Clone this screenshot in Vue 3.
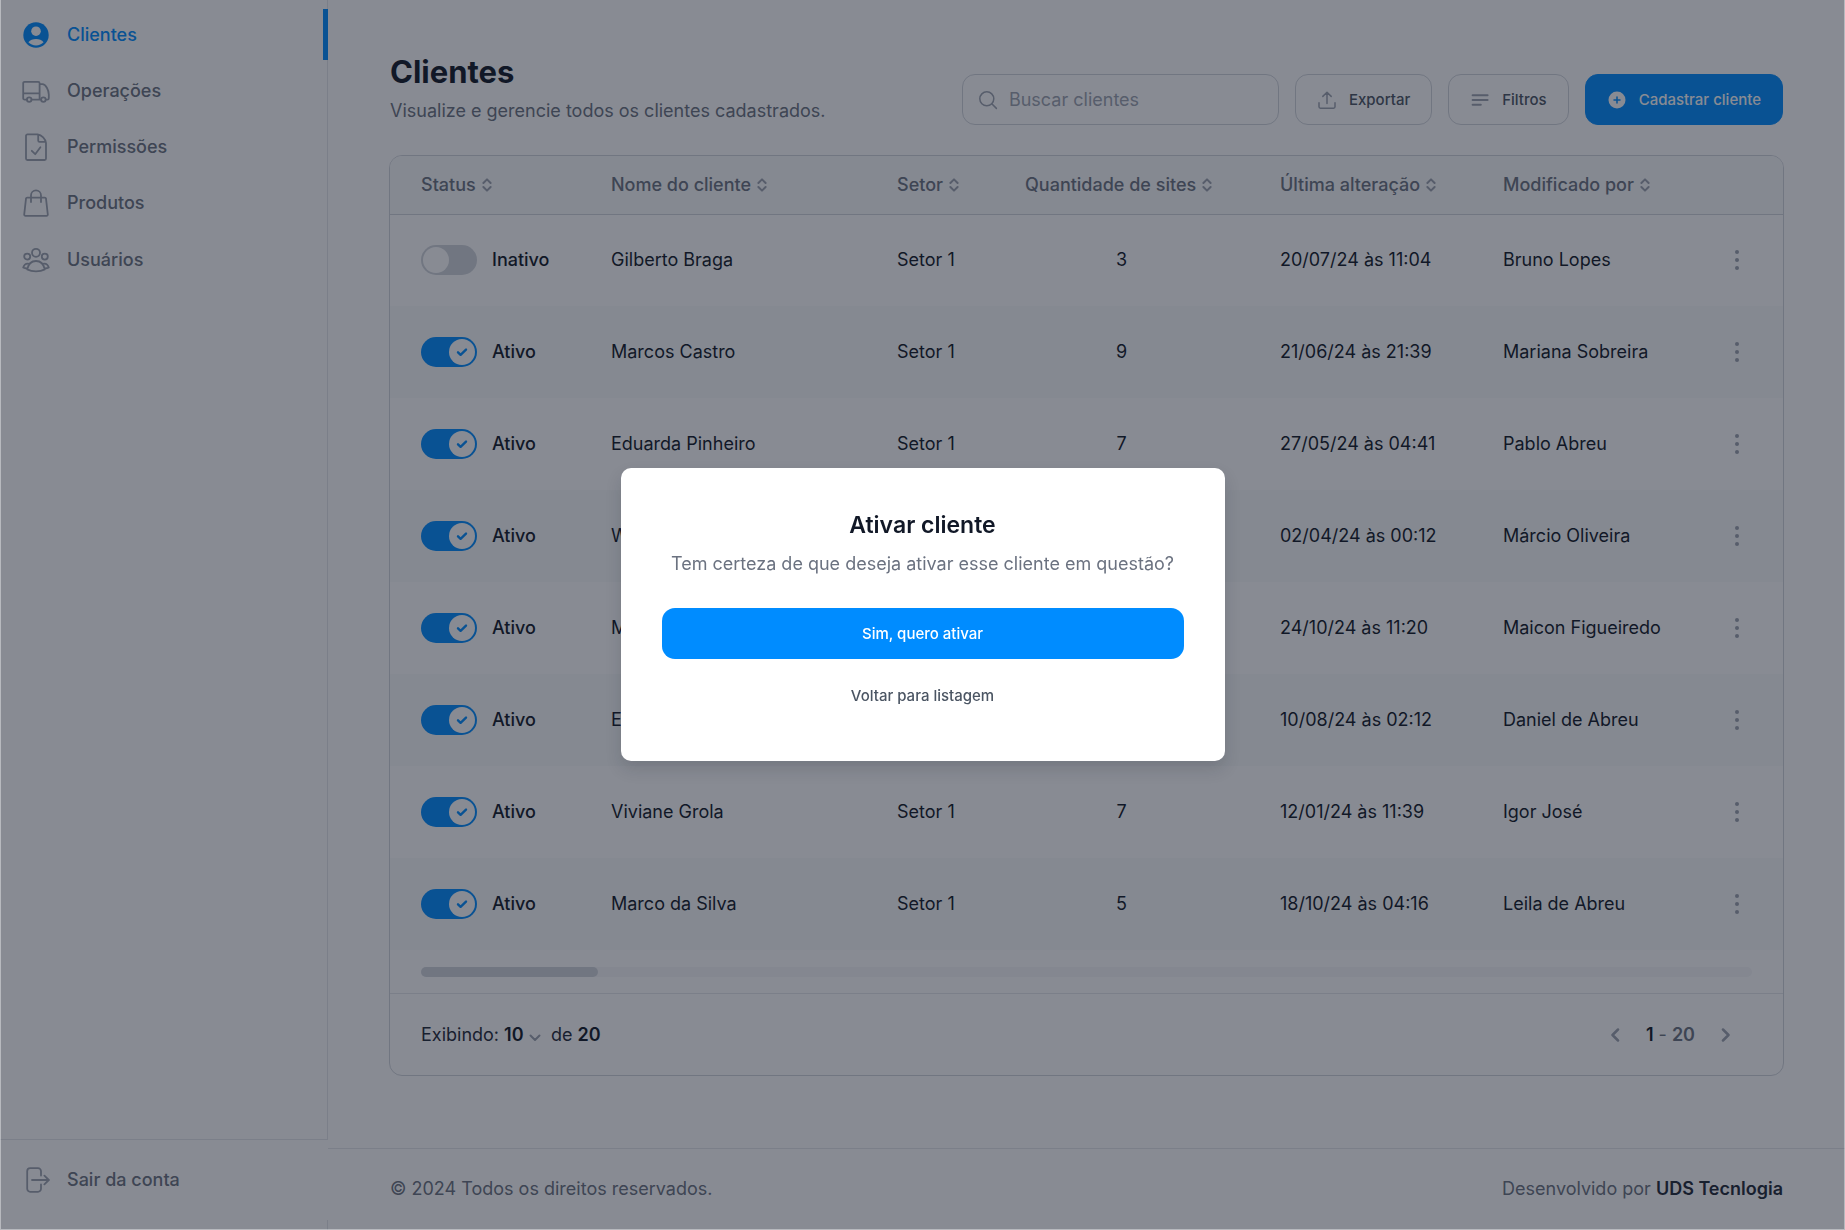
<script setup>
import { ref, reactive } from 'vue'

const navItems = [
  { label: 'Clientes', icon: 'user', active: true },
  { label: 'Operações', icon: 'truck' },
  { label: 'Permissões', icon: 'file' },
  { label: 'Produtos', icon: 'bag' },
  { label: 'Usuários', icon: 'users' },
]

const columns = [
  { key: 'status', label: 'Status' },
  { key: 'name', label: 'Nome do cliente' },
  { key: 'sector', label: 'Setor' },
  { key: 'sites', label: 'Quantidade de sites' },
  { key: 'changed', label: 'Última alteração' },
  { key: 'author', label: 'Modificado por' },
]

const clients = reactive([
  { active: false, name: 'Gilberto Braga', sector: 'Setor 1', sites: 3, changed: '20/07/24 às 11:04', author: 'Bruno Lopes' },
  { active: true, name: 'Marcos Castro', sector: 'Setor 1', sites: 9, changed: '21/06/24 às 21:39', author: 'Mariana Sobreira' },
  { active: true, name: 'Eduarda Pinheiro', sector: 'Setor 1', sites: 7, changed: '27/05/24 às 04:41', author: 'Pablo Abreu' },
  { active: true, name: 'Wagner Lima', sector: 'Setor 1', sites: 4, changed: '02/04/24 às 00:12', author: 'Márcio Oliveira' },
  { active: true, name: 'Marina Souza', sector: 'Setor 1', sites: 6, changed: '24/10/24 às 11:20', author: 'Maicon Figueiredo' },
  { active: true, name: 'Elisa Rocha', sector: 'Setor 1', sites: 2, changed: '10/08/24 às 02:12', author: 'Daniel de Abreu' },
  { active: true, name: 'Viviane Grola', sector: 'Setor 1', sites: 7, changed: '12/01/24 às 11:39', author: 'Igor José' },
  { active: true, name: 'Marco da Silva', sector: 'Setor 1', sites: 5, changed: '18/10/24 às 04:16', author: 'Leila de Abreu' },
])

const search = ref('')
const pageSize = ref('10')
const modalOpen = ref(true)

function activate() {
  clients[0].active = true
  modalOpen.value = false
}
</script>

<template>
  <div class="layout">
    <aside class="sidebar">
      <nav class="nav">
        <ul class="nav-list">
          <li v-for="item in navItems" :key="item.label">
            <a href="#" class="nav-link" :class="{ active: item.active }">
              <svg v-if="item.icon === 'user'" class="nav-icon" viewBox="0 0 28 28">
                <circle cx="14" cy="14" r="12.7" fill="currentColor" />
                <circle cx="14" cy="10.2" r="4.8" fill="#fff" />
                <path d="M6.4 21.2c1.700-2.300 4.500-3.300 7.600-3.300s5.900 1 7.600 3.300c-1.900 2-4.600 3.200-7.600 3.200s-5.700-1.200-7.600-3.200z" fill="#fff" />
              </svg>
              <svg v-else-if="item.icon === 'truck'" class="nav-icon" viewBox="0 0 28 28">
                <path d="M4.900 22.600H2.600a1.400 1.400 0 0 1-1.400-1.400V6.200a1.400 1.400 0 0 1 1.400-1.400h13.600a1.400 1.400 0 0 1 1.400 1.400v16.400M9.600 22.600h9.400M1.200 16.400h16.400M17.600 7.200h2.800c3.400 0 6.400 5.800 6.400 10.400v3.600a1.400 1.400 0 0 1-1.400 1.400h-1.600" />
                <circle cx="7.200" cy="22.600" r="2.300" />
                <circle cx="21.400" cy="22.600" r="2.300" />
              </svg>
              <svg v-else-if="item.icon === 'file'" class="nav-icon" viewBox="0 0 28 28">
                <path d="M15.600 1.400H5.400a1.400 1.400 0 0 0-1.400 1.400v22.800A1.400 1.400 0 0 0 5.400 27h17.200a1.400 1.400 0 0 0 1.400-1.400V10c-.4-4.200-4.400-8-8.400-8.600M16.200 1.800v5.600a1.400 1.400 0 0 0 1.400 1.400h5.800" />
                <path d="M9.800 17.800l3.400 3.400 5.200-7" />
              </svg>
              <svg v-else-if="item.icon === 'bag'" class="nav-icon" viewBox="0 0 28 28">
                <path d="M5.200 8.600h17.600a1.200 1.200 0 0 1 1.200 1.100l1.800 15.800a1.200 1.200 0 0 1-1.200 1.300H3.400a1.200 1.200 0 0 1-1.200-1.300L4 9.700a1.200 1.200 0 0 1 1.200-1.100zM9 13V6.400a5 5 0 0 1 10 0V13" />
              </svg>
              <svg v-else class="nav-icon" viewBox="0 0 28 28">
                <circle cx="14" cy="6.800" r="4" />
                <circle cx="5.200" cy="10.600" r="3" />
                <circle cx="22.800" cy="10.600" r="3" />
                <path d="M5.200 23.400c1-4.800 4.200-8.400 8.800-8.400s7.800 3.600 8.800 8.400c-2.400 1.300-5.400 2-8.800 2s-6.400-.7-8.800-2zM7.400 17.800c-3.200-.8-5.400 1-6.200 3.800 1 .6 2.200.9 3.800.9M20.600 17.800c3.200-.8 5.400 1 6.200 3.800-1 .6-2.200.9-3.800.9" />
              </svg>
              <span>{{ item.label }}</span>
            </a>
          </li>
        </ul>
      </nav>
      <div class="logout">
        <a href="#" class="nav-link">
          <svg class="nav-icon" viewBox="0 0 28 28">
            <path d="M19 9.600V5.200a3 3 0 0 0-3-3H8.200a3 3 0 0 0-3 3v17.600a3 3 0 0 0 3 3H16a3 3 0 0 0 3-3v-4.400M10 14h17M22.400 9.600l4.400 4.400-4.400 4.400" />
          </svg>
          <span>Sair da conta</span>
        </a>
      </div>
      <div class="sidebar-end"></div>
    </aside>

    <div class="page">
      <main class="content">
        <header class="page-header">
          <div class="heading">
            <h1>Clientes</h1>
            <p>Visualize e gerencie todos os clientes cadastrados.</p>
          </div>
          <div class="toolbar">
            <label class="search">
              <svg class="tool-icon" viewBox="0 0 20 20">
                <circle cx="8.800" cy="8.800" r="7" />
                <path d="M13.800 13.800l4.600 4.600" />
              </svg>
              <input v-model="search" type="text" placeholder="Buscar clientes" aria-label="Buscar clientes" />
            </label>
            <button type="button" class="btn">
              <svg class="tool-icon" viewBox="0 0 20 20">
                <path d="M2 12.800v4a1.400 1.400 0 0 0 1.400 1.400h13.200a1.400 1.400 0 0 0 1.400-1.400v-4M10 13.600V2.400M5.800 6.400L10 2.200l4.200 4.200" />
              </svg>
              Exportar
            </button>
            <button type="button" class="btn">
              <svg class="tool-icon bars" viewBox="0 0 20 20">
                <path d="M2.600 5.200h15M2.600 10h15M2.600 14.800h8.200" />
              </svg>
              Filtros
            </button>
            <button type="button" class="btn primary">
              <svg class="tool-icon" viewBox="0 0 20 20">
                <circle cx="10" cy="10" r="8.500" fill="#fff" stroke="none" />
                <path d="M10 7v6M7 10h6" stroke="#008cff" />
              </svg>
              Cadastrar cliente
            </button>
          </div>
        </header>

        <section class="card">
          <table>
            <colgroup>
              <col class="c-status" />
              <col />
              <col class="c-sector" />
              <col class="c-sites" />
              <col class="c-changed" />
              <col class="c-author" />
              <col class="c-actions" />
            </colgroup>
            <thead>
              <tr>
                <th v-for="col in columns" :key="col.key">
                  <span class="sort">
                    {{ col.label }}
                    <svg class="sort-icon" viewBox="0 0 10 14">
                      <path d="M1.400 5L5 1.400 8.600 5M1.400 9L5 12.600 8.600 9" />
                    </svg>
                  </span>
                </th>
                <th aria-label="Ações"></th>
              </tr>
            </thead>
            <tbody>
              <tr v-for="client in clients" :key="client.name">
                <td>
                  <label class="toggle">
                    <input v-model="client.active" type="checkbox" role="switch" />
                    <span class="track">
                      <span class="knob">
                        <svg v-if="client.active" viewBox="0 0 12 12">
                          <path d="M2 6.300l2.600 2.500L10 3.600" />
                        </svg>
                      </span>
                    </span>
                    <span>{{ client.active ? 'Ativo' : 'Inativo' }}</span>
                  </label>
                </td>
                <td>{{ client.name }}</td>
                <td>{{ client.sector }}</td>
                <td class="centered">{{ client.sites }}</td>
                <td>{{ client.changed }}</td>
                <td>{{ client.author }}</td>
                <td class="centered">
                  <button type="button" class="more" aria-label="Mais opções">
                    <svg viewBox="0 0 4 20">
                      <circle cx="2" cy="2" r="2" />
                      <circle cx="2" cy="10" r="2" />
                      <circle cx="2" cy="18" r="2" />
                    </svg>
                  </button>
                </td>
              </tr>
            </tbody>
          </table>
          <div class="scroll">
            <div class="scroll-track"><div class="scroll-thumb"></div></div>
          </div>
          <div class="card-footer">
            <div class="showing">
              <label for="page-size">Exibindo:</label>
              <span class="size">
                <select id="page-size" v-model="pageSize">
                  <option>10</option>
                  <option>20</option>
                </select>
                <svg viewBox="0 0 12 8"><path d="M1.500 1.500L6 6l4.500-4.500" /></svg>
              </span>
              <span>de</span>
              <strong>20</strong>
            </div>
            <div class="pager">
              <button type="button" aria-label="Página anterior">
                <svg viewBox="0 0 10 14"><path d="M8 1.500L2.500 7 8 12.500" /></svg>
              </button>
              <span><strong>1</strong> - <b>20</b></span>
              <button type="button" aria-label="Próxima página">
                <svg viewBox="0 0 10 14"><path d="M2 1.500L7.500 7 2 12.500" /></svg>
              </button>
            </div>
          </div>
        </section>
      </main>

      <footer class="page-footer">
        <span>© 2024 Todos os direitos reservados.</span>
        <span>Desenvolvido por <strong>UDS Tecnlogia</strong></span>
      </footer>
    </div>

    <div v-if="modalOpen" class="overlay">
      <div class="modal" role="dialog" aria-modal="true" aria-labelledby="modal-title">
        <h2 id="modal-title">Ativar cliente</h2>
        <p>Tem certeza de que deseja ativar esse cliente em questão?</p>
        <button type="button" class="confirm" @click="activate">Sim, quero ativar</button>
        <button type="button" class="back" @click="modalOpen = false">Voltar para listagem</button>
      </div>
    </div>
  </div>
</template>

<style>
body {
  margin: 0;
  background: #fff;
}
</style>

<style scoped>
* {
  box-sizing: border-box;
}

.layout {
  display: flex;
  min-height: 100vh;
  background: #fff;
  color: #111827;
  font-family: Inter, 'Liberation Sans', sans-serif;
  font-size: 18px;
  line-height: 24px;
}

button,
input,
select {
  font: inherit;
  color: inherit;
}

button {
  cursor: pointer;
}

svg {
  display: block;
  flex: none;
  fill: none;
  stroke: currentColor;
  stroke-width: 2;
  stroke-linecap: round;
  stroke-linejoin: round;
}

.sidebar {
  display: flex;
  flex-direction: column;
  flex: none;
  width: 328px;
}

.nav {
  flex: 1;
  padding-top: 9px;
  border-right: 1px solid #e5e7eb;
}

.nav-list {
  display: flex;
  flex-direction: column;
  justify-content: space-between;
  height: 276px;
  margin: 0 -1px 0 0;
  padding: 0;
  list-style: none;
}

.nav-link {
  display: flex;
  align-items: center;
  gap: 17px;
  height: 51px;
  padding-left: 22px;
  color: #6b7280;
  font-weight: 500;
  text-decoration: none;
}

.nav-link.active {
  border-right: 5px solid #008cff;
  color: #008cff;
}

.nav-icon {
  width: 28px;
  height: 28px;
  color: #9ca3af;
  stroke-width: 1.8;
}

.active .nav-icon {
  color: #008cff;
  stroke: none;
}

.logout {
  padding: 14px 0 15px;
  border-top: 1px solid #e5e7eb;
}

.sidebar-end {
  height: 10px;
  border-right: 1px solid #e5e7eb;
}

.page {
  display: flex;
  flex: 1;
  flex-direction: column;
  min-width: 0;
}

.content {
  flex: 1;
  padding: 52px 61px 0;
}

.page-header {
  display: flex;
  align-items: flex-end;
  justify-content: space-between;
  margin-bottom: 30px;
  padding: 0 1px;
}

.heading {
  padding-bottom: 2px;
}

h1 {
  margin: 0 0 7px;
  font-size: 31px;
  font-weight: 700;
  line-height: 40px;
}

.heading p {
  margin: 0;
  color: #6b7280;
}

.toolbar {
  display: flex;
  gap: 16px;
}

.search,
.btn {
  display: flex;
  align-items: center;
  height: 51px;
  border: 1px solid #d1d5db;
  border-radius: 13px;
  background: #fff;
}

.search {
  gap: 11px;
  width: 317px;
  padding: 0 15px;
  color: #9ca3af;
}

.search input {
  flex: 1;
  min-width: 0;
  padding: 0;
  border: 0;
  outline: 0;
  background: none;
}

.search input::placeholder {
  color: #9ca3af;
  opacity: 1;
}

.tool-icon {
  width: 20px;
  height: 20px;
  color: #9ca3af;
  stroke-width: 1.5;
}

.tool-icon.bars {
  stroke-width: 2;
}

.btn {
  gap: 12px;
  padding: 0 21px;
  color: #4b5563;
  font-size: 15px;
  font-weight: 500;
}

.btn.primary {
  border-color: #008cff;
  background: #008cff;
  color: #fff;
}

.card {
  overflow: hidden;
  border: 1px solid #d1d5db;
  border-radius: 13px;
}

table {
  width: 100%;
  border-collapse: collapse;
  table-layout: fixed;
}

.c-status {
  width: 190px;
}

.c-sector {
  width: 128px;
}

.c-sites {
  width: 255px;
}

.c-changed {
  width: 223px;
}

.c-author {
  width: 218px;
}

.c-actions {
  width: 93px;
}

th,
td {
  padding: 0 0 0 31px;
  text-align: left;
  white-space: nowrap;
}

thead tr {
  height: 58px;
  border-bottom: 1px solid #d1d5db;
  background: #f9fafb;
}

th {
  color: #6b7280;
  font-weight: 500;
}

.sort {
  display: flex;
  align-items: center;
  gap: 6px;
}

.sort-icon {
  width: 10px;
  height: 14px;
  color: #9ca3af;
}

tbody tr {
  height: 92px;
}

tbody tr:nth-child(even) {
  background: #f9fafb;
}

.centered {
  padding: 0;
  text-align: center;
}

.toggle {
  display: flex;
  align-items: center;
  gap: 15px;
  font-weight: 500;
}

.toggle input {
  position: absolute;
  width: 1px;
  height: 1px;
  margin: 0;
  opacity: 0;
}

.track {
  display: flex;
  width: 56px;
  height: 30px;
  padding: 2px;
  border-radius: 15px;
  background: #d1d5db;
}

.knob {
  display: flex;
  align-items: center;
  justify-content: center;
  width: 26px;
  height: 26px;
  border-radius: 50%;
  background: #fff;
  color: #008cff;
}

.knob svg {
  width: 12px;
  height: 12px;
  stroke-width: 2.4;
}

input:checked + .track {
  justify-content: flex-end;
  background: #008cff;
}

.more {
  padding: 4px 8px;
  border: 0;
  background: none;
  color: #9ca3af;
  vertical-align: middle;
}

.more svg {
  width: 4px;
  height: 20px;
  fill: currentColor;
  stroke: none;
}

.scroll {
  padding: 17px 31px 16px;
}

.scroll-track {
  height: 10px;
  border-radius: 5px;
  background: #f6f7f9;
}

.scroll-thumb {
  width: 177px;
  height: 10px;
  border-radius: 5px;
  background: #d1d5db;
}

.card-footer {
  display: flex;
  align-items: center;
  justify-content: space-between;
  height: 82px;
  padding: 0 48px 0 31px;
  border-top: 1px solid #e5e7eb;
}

.showing {
  display: flex;
  align-items: center;
  gap: 5px;
  color: #1f2937;
}

strong,
b {
  font-weight: 600;
}

.size {
  display: flex;
  align-items: center;
  margin-right: 5px;
}

.size select {
  width: 37px;
  margin-right: -12px;
  padding: 0;
  border: 0;
  appearance: none;
  background: none;
  color: #111827;
  font-weight: 600;
}

.size svg {
  width: 12px;
  height: 8px;
  margin-top: 6px;
  color: #9ca3af;
  pointer-events: none;
}

.showing strong {
  color: #111827;
}

.pager {
  display: flex;
  align-items: center;
  gap: 22px;
  color: #6b7280;
}

.pager button {
  padding: 4px;
  border: 0;
  background: none;
  color: #9ca3af;
}

.pager svg {
  width: 10px;
  height: 14px;
  stroke-width: 2.5;
}

.pager strong {
  color: #111827;
}

.page-footer {
  display: flex;
  align-items: center;
  justify-content: space-between;
  height: 82px;
  padding: 0 62px 2px;
  border-top: 1px solid #e5e7eb;
  color: #6b7280;
}

.page-footer strong {
  color: #1f2937;
}

.overlay {
  position: fixed;
  inset: 0;
  display: flex;
  align-items: center;
  justify-content: center;
  border: 1px solid rgba(255, 255, 255, 0.4);
  border-top: 0;
  background: rgba(17, 24, 39, 0.5);
}

.modal {
  display: flex;
  flex-direction: column;
  align-items: center;
  width: 604px;
  padding: 42px 41px 40px;
  border-radius: 10px;
  background: #fff;
  box-shadow: 0 8px 16px rgba(17, 24, 39, 0.15);
}

.modal h2 {
  margin: 0 0 12px;
  font-size: 23px;
  font-weight: 600;
  line-height: 30px;
}

.modal p {
  margin: 0 0 32px;
  color: #6b7280;
}

.modal button {
  height: 51px;
  padding: 0 20px;
  border: 0;
  border-radius: 13px;
  font-size: 15px;
  font-weight: 500;
}

.modal .confirm {
  align-self: stretch;
  background: #008cff;
  color: #fff;
}

.modal .back {
  margin-top: 11px;
  background: none;
  color: #4b5563;
}
</style>
